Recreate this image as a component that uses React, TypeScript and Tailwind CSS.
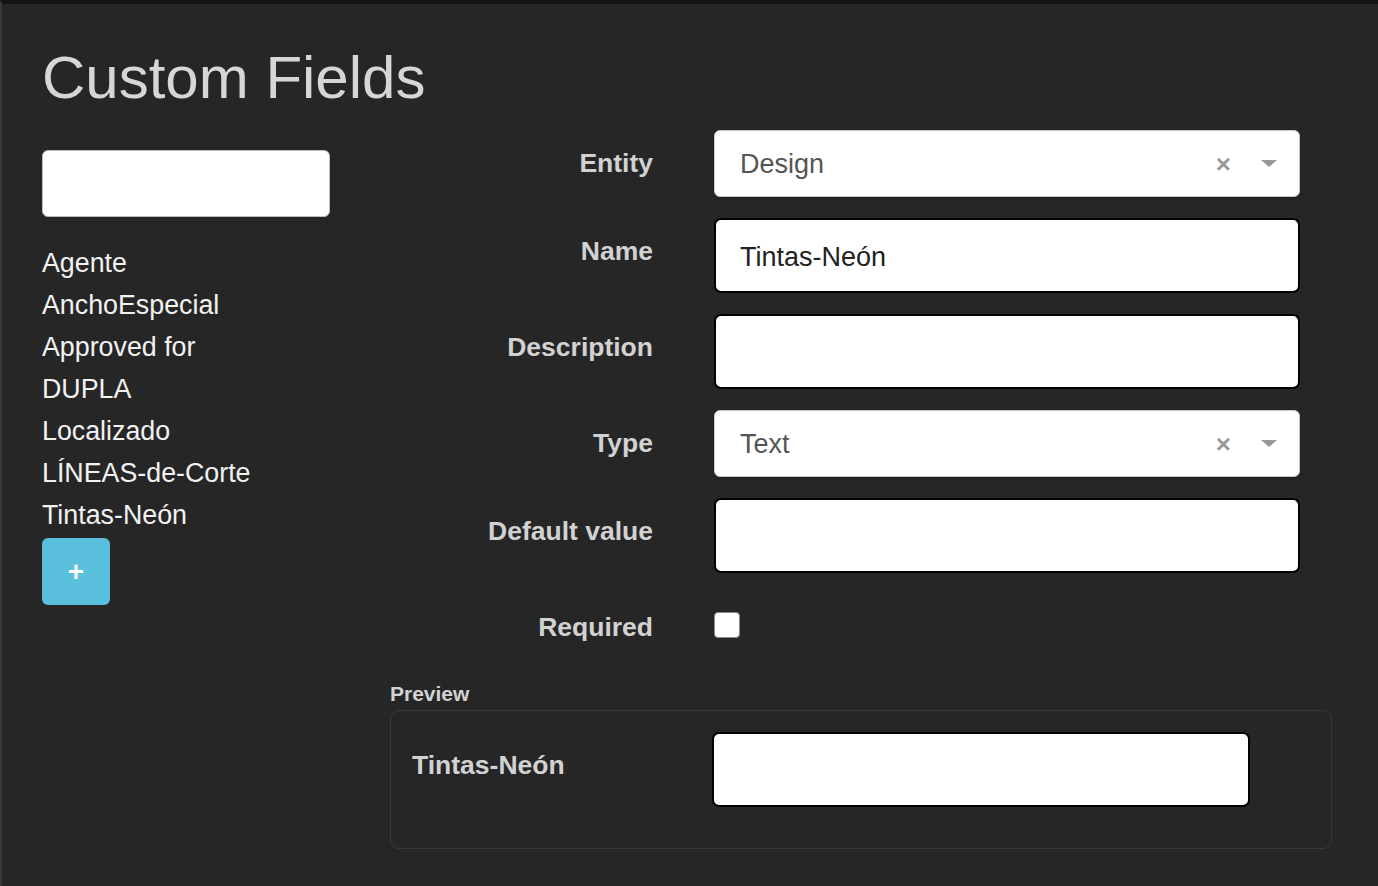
import React from 'react';

const fields = [
  'Agente',
  'AnchoEspecial',
  'Approved for',
  'DUPLA',
  'Localizado',
  'LÍNEAS-de-Corte',
  'Tintas-Neón',
];

const font = { fontFamily: '"Liberation Sans", Arial, sans-serif' };

const Label = ({ children }: { children: React.ReactNode }) => (
  <div className="w-[263px] shrink-0 pt-[12px] text-right text-[26.5px] font-bold leading-[42px] text-[#d2d2d2]">
    {children}
  </div>
);

const SelectBox = ({ value }: { value: string }) => (
  <div className="flex h-[67px] w-[586px] items-center rounded-[6px] border border-[#c8c8c8] bg-white pl-[25px] pr-[22px] shadow-[0_1px_2px_rgba(0,0,0,0.25)]">
    <span className="flex-1 pt-[2px] text-[27px] text-[#555]">{value}</span>
    <span className="mr-[30px] text-[26px] font-bold leading-none text-[#999]">×</span>
    <span className="h-0 w-0 border-x-[8px] border-t-[7px] border-x-transparent border-t-[#999]" />
  </div>
);

const TextBox = ({ value = '', width = 'w-[586px]' }: { value?: string; width?: string }) => (
  <div className={`flex h-[75px] ${width} items-center rounded-[7px] border-2 border-black bg-white px-[24px] pt-[3px] text-[27px] text-[#222]`}>
    {value}
  </div>
);

const Row = ({ label, children }: { label: string; children: React.ReactNode }) => (
  <div className="flex items-start gap-[61px]">
    <Label>{label}</Label>
    {children}
  </div>
);

export default function App() {
  return (
    <div
      className="min-h-screen border-t-4 border-l-2 border-t-[#141414] border-l-[#3a3a3a] bg-[#262626] pl-[40px]"
      style={font}
    >
      <h1 className="pt-[40px] text-[60px] leading-[67px] text-[#d6d6d6]">Custom Fields</h1>

      <div className="flex">
        <div className="w-[288px] shrink-0 pt-[39px]">
          <div className="h-[67px] w-[288px] rounded-[6px] border border-[#bdbdbd] bg-white" />
          <ul className="mt-[25px]">
            {fields.map((f) => (
              <li key={f} className="text-[26.8px] leading-[42px] text-[#f2f2f2]">
                {f}
              </li>
            ))}
          </ul>
          <button className="mt-[2px] flex h-[67px] w-[68px] items-center justify-center rounded-[6px] bg-[#5bc0de] text-[28px] font-bold text-white">
            +
          </button>
        </div>

        <div className="ml-[60px] w-[942px] pt-[19px]">
          <div className="flex flex-col gap-[21px]">
            <Row label="Entity">
              <SelectBox value="Design" />
            </Row>
            <Row label="Name">
              <TextBox value="Tintas-Neón" />
            </Row>
            <Row label="Description">
              <TextBox />
            </Row>
            <Row label="Type">
              <SelectBox value="Text" />
            </Row>
            <Row label="Default value">
              <TextBox />
            </Row>
            <Row label="Required">
              <div className="mt-[18px] h-[26px] w-[26px] rounded-[4px] border border-[#888] bg-white" />
            </Row>
          </div>

          <div className="mt-[31px] text-[21px] font-bold leading-[30px] text-[#d2d2d2]">Preview</div>
          <div className="mt-[1px] flex rounded-[9px] border border-[#383838] pb-[41px] pl-[21px] pt-[21px]">
            <div className="w-[300px] shrink-0 pt-[12px] text-[26.5px] font-bold leading-[42px] text-[#d2d2d2]">
              Tintas-Neón
            </div>
            <TextBox width="w-[538px]" />
          </div>
        </div>
      </div>
    </div>
  );
}
